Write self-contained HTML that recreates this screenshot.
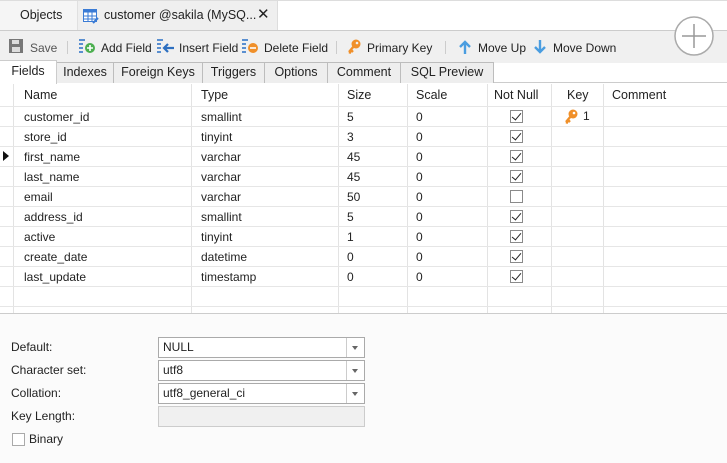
<!DOCTYPE html>
<html><head><style>
body{margin:0;width:727px;height:462px;overflow:hidden;background:#fff;font-family:"Liberation Sans",sans-serif;font-size:12px;color:#222;position:relative}
.a{position:absolute;white-space:nowrap}
.cb{position:absolute;width:11px;height:11px;border:1px solid #8a8a8a;background:#fff}
.ck::after{content:"";position:absolute;left:3px;top:0px;width:4px;height:8px;border:solid #222;border-width:0 1.5px 1.5px 0;transform:rotate(40deg)}
.vl{position:absolute;top:84px;height:229px;width:1px;background:#e3e3e3}
.hl{position:absolute;left:0;width:727px;height:1px;background:#e6e6e6}
.st{position:absolute;top:62px;height:20px;border:1px solid #bdbdbd;border-bottom:none;background:#eee;text-align:center;line-height:19px;font-size:12.5px}
.tb{position:absolute;top:41px;font-size:12px;color:#222}
.sel{position:absolute;left:158px;width:205px;height:19px;border:1px solid #aaa;background:#fff}
.sel span{position:absolute;left:4px;top:2px}
.sel i{position:absolute;right:0;top:0;width:17px;height:19px;border-left:1px solid #ccc}
.sel i::after{content:"";position:absolute;left:5px;top:8px;border:3.5px solid transparent;border-top:4px solid #666}
</style></head><body>
<div class="a" style="left:0;top:0;width:727px;height:30px;background:#fff;border-top:1px solid #ddd"></div>
<div class="a" style="left:0;top:1px;width:77px;height:29px;background:#f5f5f5;border-right:1px solid #e0e0e0"></div>
<div class="a" style="left:20px;top:8px;font-size:12.5px">Objects</div>
<div class="a" style="left:78px;top:1px;width:199px;height:29px;background:#efefef;border-right:1px solid #ddd"></div>
<svg class="a" style="left:83px;top:9px" width="16" height="15"><rect x="0.5" y="0.5" width="13" height="12" fill="#fff" stroke="#3a7bd5"/><rect x="0.5" y="0.5" width="13" height="3" fill="#3a7bd5"/><path d="M5 1v12M9 1v12M1 7h13M1 10h13" stroke="#3a7bd5"/><path d="M10 14l5-5" stroke="#3a7bd5" stroke-width="2"/></svg>
<div class="a" style="left:104px;top:8px;font-size:12.5px">customer @sakila (MySQ...</div>
<div class="a" style="left:257px;top:5px;font-size:15px">✕</div>
<div class="a" style="left:0;top:30px;width:727px;height:32px;background:#f0f0f0;border-top:1px solid #ccc"></div>
<svg class="a" style="left:9px;top:39px" width="15" height="15"><rect x="0" y="0" width="14" height="14" fill="#777"/><rect x="3" y="1" width="7" height="4" fill="#ddd"/><rect x="3" y="8" width="8" height="5" fill="#ddd"/></svg>
<div class="tb" style="left:30px;color:#555">Save</div>
<div class="a" style="left:67px;top:41px;width:1px;height:13px;background:#ccc"></div>
<svg class="a" style="left:79px;top:38px" width="18" height="16"><path d="M0 2h6M0 6h4M0 10h4M0 14h4" stroke="#5a8fd0" stroke-width="2"/><circle cx="11" cy="10" r="5" fill="#4caf50"/><path d="M8 10h6M11 7v6" stroke="#fff" stroke-width="1.6"/></svg>
<div class="tb" style="left:101px">Add Field</div>
<svg class="a" style="left:157px;top:38px" width="18" height="16"><path d="M0 2h6M0 6h4M0 10h4M0 14h4" stroke="#5a8fd0" stroke-width="2"/><path d="M17 10h-9M11 6l-4 4 4 4" stroke="#2d6fc0" stroke-width="2.2" fill="none"/></svg>
<div class="tb" style="left:179px">Insert Field</div>
<svg class="a" style="left:242px;top:38px" width="18" height="16"><path d="M0 2h6M0 6h4M0 10h4M0 14h4" stroke="#5a8fd0" stroke-width="2"/><circle cx="11" cy="10" r="5" fill="#f0902a"/><path d="M8 10h6" stroke="#fff" stroke-width="1.6"/></svg>
<div class="tb" style="left:264px">Delete Field</div>
<div class="a" style="left:336px;top:41px;width:1px;height:13px;background:#ccc"></div>
<svg class="a" style="left:347px;top:39px" width="14" height="15"><circle cx="9" cy="5" r="4.5" fill="#f0902a"/><circle cx="10" cy="4" r="1.3" fill="#f0f0f0"/><path d="M7 7l-5 6M4 11l2 2M2 13l2 1" stroke="#f0902a" stroke-width="2.4"/></svg>
<div class="tb" style="left:367px">Primary Key</div>
<div class="a" style="left:445px;top:41px;width:1px;height:13px;background:#ccc"></div>
<svg class="a" style="left:458px;top:40px" width="14" height="14"><path d="M7 14V2M2 7l5-5 5 5" stroke="#4a9de0" stroke-width="2.4" fill="none"/></svg>
<div class="tb" style="left:478px">Move Up</div>
<svg class="a" style="left:533px;top:40px" width="14" height="14"><path d="M7 0v12M2 7l5 5 5-5" stroke="#4a9de0" stroke-width="2.4" fill="none"/></svg>
<div class="tb" style="left:553px">Move Down</div>
<svg class="a" style="left:674px;top:16px" width="40" height="40"><circle cx="20" cy="20" r="19" fill="#fff" stroke="#aaa" stroke-width="1.5"/><path d="M8 20h24M20 8v24" stroke="#999" stroke-width="1.5"/></svg>
<div class="a" style="left:0;top:82px;width:727px;height:1px;background:#ccc"></div>
<div class="st" style="left:56px;width:56px">Indexes</div>
<div class="st" style="left:113px;width:88px">Foreign Keys</div>
<div class="st" style="left:202px;width:61px">Triggers</div>
<div class="st" style="left:264px;width:62px">Options</div>
<div class="st" style="left:327px;width:72px">Comment</div>
<div class="st" style="left:400px;width:92px">SQL Preview</div>
<div class="a" style="left:0;top:60px;width:56px;height:23px;background:#fff;border:1px solid #ccc;border-bottom:none;border-left:none;text-align:center;line-height:21px;font-size:12.5px">Fields</div>
<div class="vl" style="left:13px"></div><div class="vl" style="left:191px"></div><div class="vl" style="left:338px"></div><div class="vl" style="left:407px"></div><div class="vl" style="left:487px"></div><div class="vl" style="left:551px"></div><div class="vl" style="left:603px"></div>
<div class="hl" style="top:106px"></div><div class="hl" style="top:126px"></div><div class="hl" style="top:146px"></div><div class="hl" style="top:166px"></div><div class="hl" style="top:186px"></div><div class="hl" style="top:206px"></div><div class="hl" style="top:226px"></div><div class="hl" style="top:246px"></div><div class="hl" style="top:266px"></div><div class="hl" style="top:286px"></div><div class="hl" style="top:306px"></div>
<div class="a" style="left:0;top:313px;width:727px;height:149px;background:#fbfbfb;border-top:1px solid #ccc"></div>
<div class="a" style="top:88px;left:24px;font-size:12.5px">Name</div><div class="a" style="top:88px;left:201px;font-size:12.5px">Type</div><div class="a" style="top:88px;left:347px;font-size:12.5px">Size</div><div class="a" style="top:88px;left:416px;font-size:12.5px">Scale</div><div class="a" style="top:88px;left:494px;font-size:12.5px">Not Null</div><div class="a" style="top:88px;left:567px;font-size:12.5px">Key</div><div class="a" style="top:88px;left:612px;font-size:12.5px">Comment</div>
<div class="a" style="left:24px;top:107px;line-height:20px">customer_id<br>store_id<br>first_name<br>last_name<br>email<br>address_id<br>active<br>create_date<br>last_update</div>
<div class="a" style="left:201px;top:107px;line-height:20px">smallint<br>tinyint<br>varchar<br>varchar<br>varchar<br>smallint<br>tinyint<br>datetime<br>timestamp</div>
<div class="a" style="left:347px;top:107px;line-height:20px">5<br>3<br>45<br>45<br>50<br>5<br>1<br>0<br>0</div>
<div class="a" style="left:416px;top:107px;line-height:20px">0<br>0<br>0<br>0<br>0<br>0<br>0<br>0<br>0</div>
<div class="a" style="left:3px;top:151px;border:5px solid transparent;border-left:6px solid #111"></div>
<div class="cb ck" style="left:510px;top:110px"></div><div class="cb ck" style="left:510px;top:130px"></div><div class="cb ck" style="left:510px;top:150px"></div><div class="cb ck" style="left:510px;top:170px"></div><div class="cb" style="left:510px;top:190px"></div><div class="cb ck" style="left:510px;top:210px"></div><div class="cb ck" style="left:510px;top:230px"></div><div class="cb ck" style="left:510px;top:250px"></div><div class="cb ck" style="left:510px;top:270px"></div>
<svg class="a" style="left:564px;top:109px" width="14" height="15"><circle cx="9" cy="5" r="4.5" fill="#f0902a"/><circle cx="10" cy="4" r="1.3" fill="#fff"/><path d="M7 7l-5 6M4 11l2 2M2 13l2 1" stroke="#f0902a" stroke-width="2.4"/></svg>
<div class="a" style="left:583px;top:109px">1</div>
<div class="a" style="left:11px;top:340px">Default:</div>
<div class="a" style="left:11px;top:363px">Character set:</div>
<div class="a" style="left:11px;top:386px">Collation:</div>
<div class="a" style="left:11px;top:409px">Key Length:</div>
<div class="sel" style="top:337px"><span>NULL</span><i></i></div>
<div class="sel" style="top:360px"><span>utf8</span><i></i></div>
<div class="sel" style="top:383px"><span>utf8_general_ci</span><i></i></div>
<div class="a" style="left:158px;top:406px;width:205px;height:19px;border:1px solid #ccc;background:#f0f0f0"></div>
<div class="cb" style="left:12px;top:433px;border-color:#aaa"></div>
<div class="a" style="left:29px;top:432px">Binary</div>
</body></html>
